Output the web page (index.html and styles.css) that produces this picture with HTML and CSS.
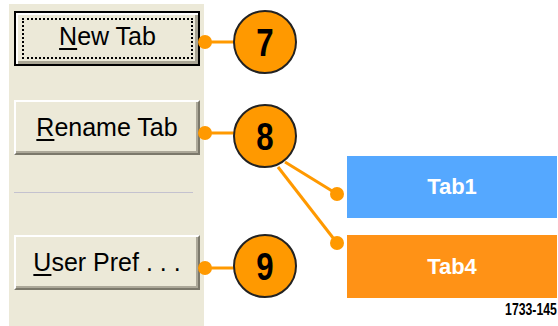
FILE: index.html
```html
<!DOCTYPE html>
<html>
<head>
<meta charset="utf-8">
<link rel="stylesheet" href="styles.css">
</head>
<body>
<div class="page">
  <div class="panel">
    <div class="btn btn-default"><span class="focus"><u>N</u>ew Tab</span></div>
    <div class="btn btn-rename"><span class="label"><u>R</u>ename Tab</span></div>
    <div class="sep"></div>
    <div class="btn btn-pref"><span class="label"><u>U</u>ser Pref . . .</span></div>
  </div>
  <div class="tabs">
    <div class="tab tab-blue">Tab1</div>
    <div class="tab tab-orange">Tab4</div>
    <div class="figno"><span>1733-145</span></div>
  </div>
  <svg class="callouts" width="558" height="326" viewBox="0 0 558 326">
    <g stroke="#ff9900" stroke-width="3" fill="none">
      <line x1="205" y1="42" x2="236" y2="42"/>
      <line x1="205" y1="133" x2="236" y2="133"/>
      <line x1="205" y1="268" x2="236" y2="268"/>
      <line x1="285" y1="162" x2="337" y2="194"/>
      <line x1="278" y1="167" x2="337" y2="243"/>
    </g>
    <g fill="#ff9900">
      <circle cx="205" cy="42" r="7"/>
      <circle cx="205" cy="133" r="7"/>
      <circle cx="205" cy="268" r="7"/>
      <circle cx="337" cy="194" r="7"/>
      <circle cx="337" cy="243" r="7"/>
    </g>
    <g fill="#ff9900" stroke="#222" stroke-width="2">
      <circle cx="265" cy="42" r="31"/>
      <circle cx="265" cy="136" r="31"/>
      <circle cx="265" cy="266" r="31"/>
    </g>
    <g class="num">
      <text x="265" y="42" transform="translate(265 0) scale(0.8 1) translate(-265 0)" dy="14">7</text>
      <text x="265" y="136" transform="translate(265 0) scale(0.8 1) translate(-265 0)" dy="14">8</text>
      <text x="265" y="266" transform="translate(265 0) scale(0.8 1) translate(-265 0)" dy="14">9</text>
    </g>
  </svg>
</div>
</body>
</html>
```

FILE: styles.css
```css
html, body {
  margin: 0;
  padding: 0;
  background: #fff;
}
.page {
  position: relative;
  width: 558px;
  height: 326px;
  display: flex;
  overflow: hidden;
  font-family: "Liberation Sans", Arial, sans-serif;
}
.panel {
  margin: 4px 0 0 9px;
  width: 195px;
  height: 322px;
  box-sizing: border-box;
  background: #ece9d8;
  padding: 7px 0 0 5px;
  display: flex;
  flex-direction: column;
}
.btn {
  width: 186px;
  height: 55px;
  box-sizing: border-box;
  background: #ece9d8;
  display: flex;
  align-items: center;
  justify-content: center;
  font-size: 25px;
  color: #000;
}
.btn u {
  text-decoration-thickness: 2px;
  text-underline-offset: 3px;
}
.btn-default {
  border: 2px solid #000;
  box-shadow: inset 2px 2px 0 #fff, inset -3px -3px 0 #a9a594;
  padding: 5px 5px 5px 6px;
  align-items: stretch;
}
.focus {
  flex: 1;
  border: 2px dotted #000;
  display: flex;
  align-items: center;
  justify-content: center;
  padding-bottom: 4px;
}
.btn-rename, .btn-pref {
  border-top: 2px solid #fff;
  border-left: 2px solid #fff;
  border-right: 2px solid #7b786b;
  border-bottom: 2px solid #7b786b;
  box-shadow: inset -2px -2px 0 #aca899;
}
.btn-rename {
  margin-top: 34px;
}
.sep {
  margin-top: 37px;
  width: 179px;
  height: 1px;
  background: #c4c2cf;
}
.btn-pref {
  margin-top: 42px;
}
.tabs {
  margin-left: 143px;
  padding-top: 156px;
  width: 210px;
  display: flex;
  flex-direction: column;
}
.tab {
  height: 62px;
  display: flex;
  align-items: center;
  justify-content: center;
  color: #fff;
  font-weight: bold;
  font-size: 22px;
}
.tab-blue {
  background: #55a8ff;
}
.tab-orange {
  margin-top: 17px;
  height: 63px;
  background: #ff9216;
}
.figno {
  display: flex;
  justify-content: flex-end;
  margin-top: 2px;
}
.figno span {
  font-size: 17px;
  font-weight: bold;
  color: #000;
  transform: scaleX(0.72);
  transform-origin: right center;
  white-space: nowrap;
}
.callouts {
  position: absolute;
  left: 0;
  top: 0;
}
.num text {
  font-family: "Liberation Sans", Arial, sans-serif;
  font-weight: bold;
  font-size: 39px;
  text-anchor: middle;
  fill: #000;
}
```
